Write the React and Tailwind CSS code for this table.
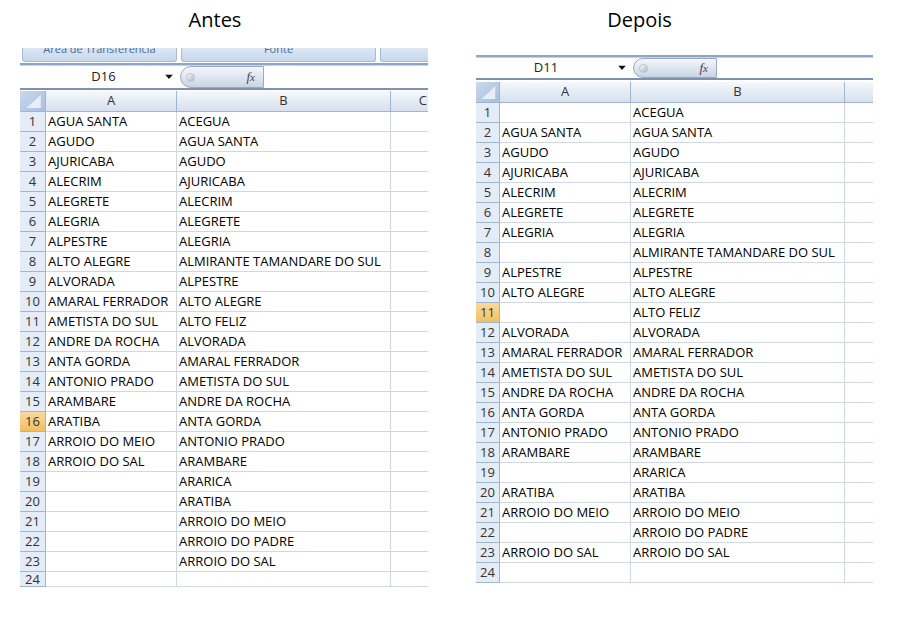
import React from "react";

const LEFT_A = ["AGUA SANTA","AGUDO","AJURICABA","ALECRIM","ALEGRETE","ALEGRIA","ALPESTRE","ALTO ALEGRE","ALVORADA","AMARAL FERRADOR","AMETISTA DO SUL","ANDRE DA ROCHA","ANTA GORDA","ANTONIO PRADO","ARAMBARE","ARATIBA","ARROIO DO MEIO","ARROIO DO SAL","","","","","",""];
const B_COL = ["ACEGUA","AGUA SANTA","AGUDO","AJURICABA","ALECRIM","ALEGRETE","ALEGRIA","ALMIRANTE TAMANDARE DO SUL","ALPESTRE","ALTO ALEGRE","ALTO FELIZ","ALVORADA","AMARAL FERRADOR","AMETISTA DO SUL","ANDRE DA ROCHA","ANTA GORDA","ANTONIO PRADO","ARAMBARE","ARARICA","ARATIBA","ARROIO DO MEIO","ARROIO DO PADRE","ARROIO DO SAL",""];
const RIGHT_A = ["","AGUA SANTA","AGUDO","AJURICABA","ALECRIM","ALEGRETE","ALEGRIA","","ALPESTRE","ALTO ALEGRE","","ALVORADA","AMARAL FERRADOR","AMETISTA DO SUL","ANDRE DA ROCHA","ANTA GORDA","ANTONIO PRADO","ARAMBARE","","ARATIBA","ARROIO DO MEIO","","ARROIO DO SAL",""];

function Corner() {
  return (
    <div className="h-full w-full bg-linear-to-br from-[#c9d8ec] to-[#a9bfdf] relative">
      <svg className="absolute inset-0" width="100%" height="100%" viewBox="0 0 24 20" preserveAspectRatio="none">
        <polygon points="20,4 20,17 6,17" fill="#e6eef8" />
      </svg>
    </div>
  );
}

function FormulaBar({ name, nameW, namePad }) {
  return (
    <div className="flex h-full items-stretch bg-white">
      <div className={`${nameW} flex items-center relative`}>
        <span className={`flex-1 text-center text-[13px] text-[#222] ${namePad}`}>{name}</span>
        <svg className="absolute right-[4px] top-1/2 -translate-y-1/2" width="8" height="5" viewBox="0 0 8 5">
          <polygon points="0,0 8,0 4,4.5" fill="#111" />
        </svg>
      </div>
      <div className="w-[84px] ml-[3px] rounded-l-full border border-[#98aac4] bg-linear-to-b from-[#f4f7fb] via-[#dfe6f0] to-[#c9d4e4] flex items-center justify-between pl-[5px] pr-[8px]">
        <div className="w-[9px] h-[9px] rounded-full bg-linear-to-br from-[#ffffff] to-[#a8b3c3] border border-[#b8c2d0]" />
        <span className="text-[13px] italic text-[#444] font-['Liberation_Serif',serif]">f<span className="text-[11px]">x</span></span>
      </div>
      <div className="flex-1" />
    </div>
  );
}

function Sheet({ rowNumW, cW, A, B, selected, lastH, showC }) {
  return (
    <div className="flex flex-col">
      <div className="flex h-[21px] bg-linear-to-b from-[#f5f8fc] to-[#d6e0ee] border-b border-[#9eb6ce]">
        <div className={`${rowNumW} border-r border-[#9eb6ce]`}><Corner /></div>
        <div className="w-[131px] border-r border-[#9eb6ce] flex items-center justify-center text-[13px] text-[#333]">A</div>
        <div className="w-[214px] border-r border-[#9eb6ce] flex items-center justify-center text-[13px] text-[#333]">B</div>
        <div className={`${cW} flex items-center justify-end pr-[1px] text-[13px] text-[#333] overflow-hidden`}>{showC ? "C" : ""}</div>
      </div>
      {A.map((a, i) => {
        const n = i + 1;
        const last = n === 24;
        const sel = n === selected;
        return (
          <div key={n} className={`flex ${last ? lastH : "h-[20px]"} overflow-hidden`}>
            <div className={`${rowNumW} shrink-0 border-r border-b border-[#9eb6ce] flex items-center justify-center pt-[1px] text-[13px] text-[#333] ${sel ? "bg-linear-to-b from-[#f9d99f] to-[#f1bf5c]" : "bg-[#e4ecf7]"}`}>{n}</div>
            <div className="w-[131px] shrink-0 border-r border-b border-[#d0d7e5] flex items-center pl-[2px] pt-[1px] text-[13px] text-black whitespace-nowrap overflow-hidden">{a}</div>
            <div className="w-[214px] shrink-0 border-r border-b border-[#d0d7e5] flex items-center pl-[2px] pt-[1px] text-[13px] text-black whitespace-nowrap overflow-hidden">{B[i]}</div>
            <div className={`${cW} shrink-0 border-b border-[#d0d7e5]`} />
          </div>
        );
      })}
    </div>
  );
}

function RibbonBtn({ w, label }) {
  return (
    <div className={`${w} h-[14px] rounded-b-[3px] border border-t-0 border-[#a6bbd8] bg-linear-to-b from-[#dce7f5] to-[#c6d7ec] overflow-hidden flex justify-center`}>
      <span className="text-[11px] leading-[11px] -mt-[5px] text-[#4a6a95] whitespace-nowrap">{label}</span>
    </div>
  );
}

export default function App() {
  return (
    <div className="w-[921px] h-[630px] bg-white flex font-['Open_Sans',sans-serif] overflow-hidden">
      <div className="ml-[20px] w-[408px] flex flex-col">
        <div className="h-[40px] flex items-center justify-center pr-[18px] text-[20px] text-black">Antes</div>
        <div className="h-[23px] pt-[8px] flex gap-[4px] pl-[2px]">
          <RibbonBtn w="w-[155px]" label="Área de Transferência" />
          <RibbonBtn w="w-[195px]" label="Fonte" />
          <div className="flex-1 h-[14px] rounded-bl-[3px] border border-t-0 border-r-0 border-[#a6bbd8] bg-linear-to-b from-[#dce7f5] to-[#c6d7ec]" />
        </div>
        <div className="h-[3px] border-t-2 border-[#8fa5c6] bg-[#c2d3ea]" />
        <div className="h-[22px]"><FormulaBar name="D16" nameW="w-[157px]" namePad="pl-[10px]" /></div>
        <div className="h-[2px] bg-[#7f92ad]" />
        <div className="h-[1px] bg-white" />
        <Sheet rowNumW="w-[26px]" cW="w-[37px]" A={LEFT_A} B={B_COL} selected={16} lastH="h-[15px]" showC />
      </div>
      <div className="ml-[48px] w-[397px] flex flex-col">
        <div className="h-[40px] flex items-center justify-center pr-[70px] text-[20px] text-black">Depois</div>
        <div className="h-[15px]" />
        <div className="h-[3px] border-t-2 border-[#8fa5c6] bg-[#c2d3ea]" />
        <div className="h-[20px]"><FormulaBar name="D11" nameW="w-[154px]" namePad="pr-[14px]" /></div>
        <div className="h-[2px] bg-[#7f92ad]" />
        <div className="h-[2px] bg-white" />
        <Sheet rowNumW="w-[24px]" cW="w-[28px]" A={RIGHT_A} B={B_COL} selected={11} lastH="h-[20px]" />
      </div>
    </div>
  );
}
